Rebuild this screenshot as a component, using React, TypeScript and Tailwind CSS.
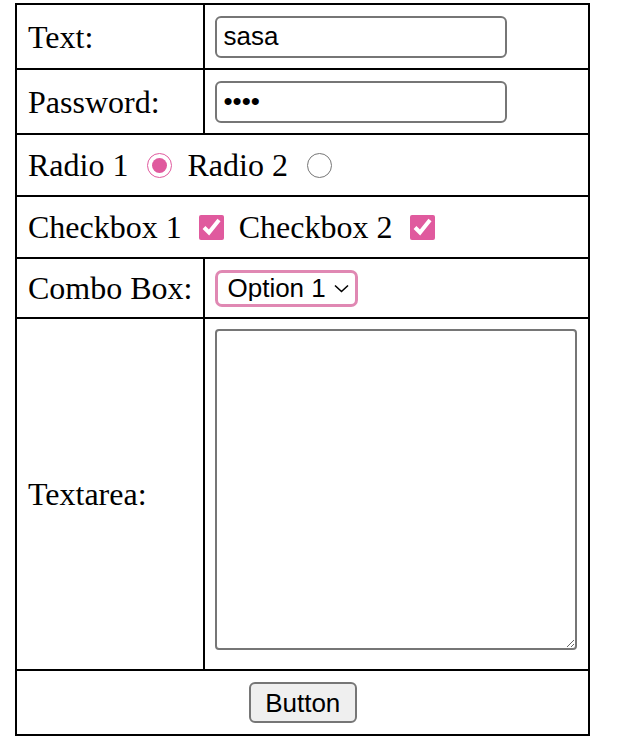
import { useState } from "react";

const serif = "font-['Liberation_Serif',serif] text-[32px] leading-none text-black whitespace-nowrap";
const sans = "font-['Liberation_Sans',Arial,sans-serif] text-[26px] text-black";

export default function App() {
  const [text, setText] = useState("sasa");
  const [pass, setPass] = useState("sasa");
  const [radio, setRadio] = useState("1");
  const [cb1, setCb1] = useState(true);
  const [cb2, setCb2] = useState(true);

  return (
    <div className="bg-white w-[630px] h-[755px] pt-[3px] pl-[15px]">
      <table className={`border-collapse border-2 border-black ${serif}`}>
        <tbody>
          <tr className="h-[65px]">
            <td className="border-2 border-black w-[186px] px-[11px] align-middle">Text:</td>
            <td className="border-2 border-black w-[385px] pl-[10px] pr-[11px] align-middle">
              <input
                type="text"
                value={text}
                onChange={(e) => setText(e.target.value)}
                className={`${sans} block w-[292px] h-[42px] border-2 border-[#767676] rounded-[6px] px-[6px] outline-none`}
              />
            </td>
          </tr>
          <tr className="h-[65px]">
            <td className="border-2 border-black px-[11px]">Password:</td>
            <td className="border-2 border-black pl-[10px] pr-[11px]">
              <input
                type="password"
                value={pass}
                onChange={(e) => setPass(e.target.value)}
                className={`${sans} block w-[292px] h-[42px] border-2 border-[#767676] rounded-[6px] px-[6px] outline-none`}
              />
            </td>
          </tr>
          <tr className="h-[62px]">
            <td colSpan={2} className="border-2 border-black px-[11px]">
              <div className="flex items-center">
                <span>Radio 1</span>
                <input
                  type="radio"
                  name="r"
                  checked={radio === "1"}
                  onChange={() => setRadio("1")}
                  className="w-[25px] h-[25px] m-0 ml-[19px] mr-[15px] accent-[#e05a9e]"
                />
                <span>Radio 2</span>
                <input
                  type="radio"
                  name="r"
                  checked={radio === "2"}
                  onChange={() => setRadio("2")}
                  className="w-[25px] h-[25px] m-0 ml-[19px] accent-[#e05a9e]"
                />
              </div>
            </td>
          </tr>
          <tr className="h-[62px]">
            <td colSpan={2} className="border-2 border-black px-[11px]">
              <div className="flex items-center">
                <span>Checkbox 1</span>
                <input
                  type="checkbox"
                  checked={cb1}
                  onChange={(e) => setCb1(e.target.checked)}
                  className="w-[25px] h-[25px] m-0 ml-[17px] mr-[15px] accent-[#e05a9e]"
                />
                <span>Checkbox 2</span>
                <input
                  type="checkbox"
                  checked={cb2}
                  onChange={(e) => setCb2(e.target.checked)}
                  className="w-[25px] h-[25px] m-0 ml-[17px] accent-[#e05a9e]"
                />
              </div>
            </td>
          </tr>
          <tr className="h-[60px]">
            <td className="border-2 border-black px-[11px]">Combo Box:</td>
            <td className="border-2 border-black pl-[10px] pr-[11px]">
              <div className="relative w-[143px] h-[37px]">
                <select
                  defaultValue="1"
                  className={`${sans} leading-none appearance-none block w-[143px] h-[37px] border-[3px] border-[#e088b3] rounded-[7px] pl-[9px] pr-[28px] bg-white outline-none`}
                >
                  <option value="1">Option 1</option>
                  <option value="2">Option 2</option>
                </select>
                <svg
                  className="absolute right-[9px] top-[14px] pointer-events-none"
                  width="15"
                  height="9"
                  viewBox="0 0 15 9"
                  fill="none"
                  stroke="#000"
                  strokeWidth="1.6"
                >
                  <path d="M1 1.5 L7.5 7.5 L14 1.5" />
                </svg>
              </div>
            </td>
          </tr>
          <tr className="h-[352px]">
            <td className="border-2 border-black px-[11px]">Textarea:</td>
            <td className="border-2 border-black pl-[10px] pr-[11px] pt-[10px] align-top">
              <textarea className="block w-[362px] h-[321px] border-2 border-[#767676] rounded-[4px] outline-none" />
            </td>
          </tr>
          <tr className="h-[65px]">
            <td colSpan={2} className="border-2 border-black text-center">
              <button
                className={`${sans} inline-block w-[108px] h-[41px] leading-none bg-[#efefef] border-2 border-[#767676] rounded-[6px]`}
              >
                Button
              </button>
            </td>
          </tr>
        </tbody>
      </table>
    </div>
  );
}
